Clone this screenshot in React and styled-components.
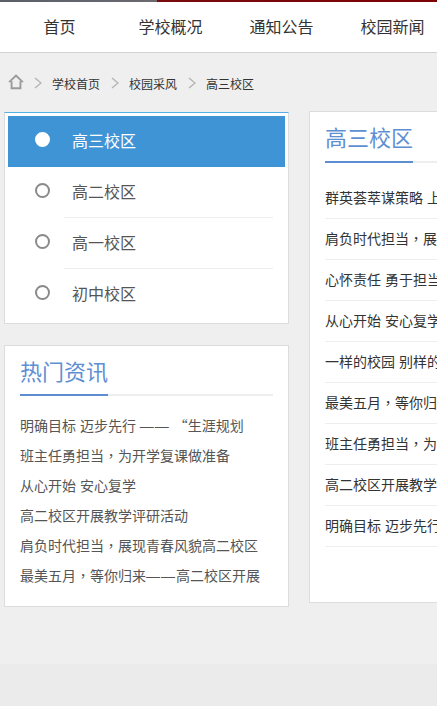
import React from 'react'
import styled, { createGlobalStyle } from 'styled-components'

const GlobalStyle = createGlobalStyle`
  html, body {
    margin: 0;
    padding: 0;
    background: #eeeeee;
    overflow: hidden;
  }
  * { box-sizing: border-box; }
`

const Root = styled.div`
  width: 437px;
  height: 706px;
  overflow: hidden;
  background: #efefef;
  font-family: "Liberation Sans", "Noto Sans CJK SC", sans-serif;
  display: flex;
  flex-direction: column;
`

const TopStrip = styled.div`
  height: 2px;
  flex: none;
  background: linear-gradient(90deg, #5a5f68 0, #6a6a70 36%, #7a0a0c 36%, #7d0205 100%);
`

const Nav = styled.nav`
  height: 51px;
  flex: none;
  background: #fff;
  border-bottom: 1px solid #d2d2d2;
  display: flex;
  padding-left: 4px;
  overflow: hidden;
`

const NavItem = styled.a`
  flex: none;
  width: 111px;
  text-align: center;
  font-size: 16px;
  line-height: 52px;
  color: #333;
`

const Crumbs = styled.div`
  height: 58px;
  flex: none;
  display: flex;
  align-items: center;
  padding: 2px 0 0 8px;
  font-size: 12px;
  color: #333;
`

const HomeSvg = styled.svg`
  width: 16px;
  height: 16px;
  margin: -2px -1px 0 0;
  flex: none;
`

const Chevron = styled.svg`
  width: 8px;
  height: 12px;
  margin: 0 10px 0 11px;
  flex: none;
`

const Columns = styled.div`
  display: flex;
  align-items: flex-start;
  gap: 20px;
  padding-left: 4px;
  height: 553px;
  flex: none;
`

const LeftColumn = styled.div`
  width: 285px;
  flex: none;
  display: flex;
  flex-direction: column;
  gap: 21px;
  padding-top: 1px;
`

const Card = styled.section`
  background: #fff;
  border: 1px solid #dcdcdc;
`

const MenuCard = styled(Card)`
  height: 212px;
  border-top: 1px solid #55b0e4;
  padding: 3px 3px 0;
`

const MenuRow = styled.div`
  height: 51px;
  display: flex;
  padding-left: 27px;
  background: ${p => (p.$active ? '#3f94d6' : 'transparent')};
  color: ${p => (p.$active ? '#fff' : '#555')};
  font-size: 16px;
`

const Dot = styled.span`
  width: 15px;
  height: 15px;
  margin-top: 16px;
  border-radius: 50%;
  flex: none;
  border: 2px solid ${p => (p.$active ? '#fff' : '#8a8a8a')};
  background: ${p => (p.$active ? '#fff' : 'transparent')};
`

const MenuLabel = styled.div`
  flex: none;
  width: 209px;
  padding-left: 8px;
  margin-left: 14px;
  line-height: 51px;
  border-bottom: 1px solid ${p => (p.$line ? '#eeeeee' : 'transparent')};
`

const HotCard = styled(Card)`
  height: 262px;
  padding: 0 15px;
`

const Title = styled.div`
  height: 50px;
  border-bottom: 2px solid #eeeeee;
  display: flex;
`

const TitleText = styled.h2`
  margin: 0 0 -2px;
  font-size: 22px;
  font-weight: 400;
  line-height: 54px;
  color: #5f8fd3;
  border-bottom: 2px solid #5a8ed0;
`

const HotList = styled.ul`
  list-style: none;
  margin: 15px 0 0;
  padding: 0;
`

const HotRow = styled.li`
  height: 30px;
  line-height: 30px;
  font-size: 14px;
  color: #555;
  white-space: nowrap;
`

const MainCard = styled(Card)`
  width: 400px;
  height: 492px;
  flex: none;
  padding: 0 15px;
`

const MainTitle = styled(Title)`
  height: 51px;
`

const NewsList = styled.ul`
  list-style: none;
  margin: 15px 0 0;
  padding: 0;
`

const NewsRow = styled.li`
  height: 41px;
  line-height: 40px;
  font-size: 14px;
  color: #333;
  white-space: nowrap;
  overflow: hidden;
  border-bottom: 1px solid #eeeeee;
`

const Comma = styled.span`
  font-family: "Noto Sans CJK TC", sans-serif;
  line-height: 0;
`

const Quote = styled.span`
  font-family: "Noto Sans CJK SC", sans-serif;
  line-height: 0;
`

const Dash = styled.span`
  letter-spacing: 1px;
`

const Footer = styled.div`
  flex: 1;
  background: #ebebeb;
`

const navItems = ['首页', '学校概况', '通知公告', '校园新闻']
const campuses = ['高三校区', '高二校区', '高一校区', '初中校区']
const hotNews = [
  '明确目标 迈步先行 —— “生涯规划',
  '班主任勇担当，为开学复课做准备',
  '从心开始 安心复学',
  '高二校区开展教学评研活动',
  '肩负时代担当，展现青春风貌高二校区',
  '最美五月，等你归来——高二校区开展',
]
const news = [
  '群英荟萃谋策略 上下同心创佳绩',
  '肩负时代担当，展现青春风貌',
  '心怀责任 勇于担当',
  '从心开始 安心复学',
  '一样的校园 别样的精彩',
  '最美五月，等你归来',
  '班主任勇担当，为开学复课做准备',
  '高二校区开展教学评研活动',
  '明确目标 迈步先行',
]

// punctuation is set differently in the original font
const punctuate = (text) =>
  text.split(/(，|“|——)/).map((part, i) => {
    if (part === '，') return <Comma key={i}>{part}</Comma>
    if (part === '“') return <Quote key={i}>{part}</Quote>
    if (part === '——') return <Dash key={i}>{part}</Dash>
    return part
  })

const HomeIcon = () => (
  <HomeSvg viewBox="0 0 17 17" fill="none" stroke="#9a9a9a" strokeWidth="2">
    <path d="M1.2 8.6 8.5 1.6l7.3 7" />
    <path d="M3.8 7.6v7.6h9.4V7.6" />
  </HomeSvg>
)

const ChevronIcon = () => (
  <Chevron viewBox="0 0 8 12" fill="none" stroke="#b4b4b4" strokeWidth="1.4">
    <path d="M1 1l6 5-6 5" />
  </Chevron>
)

const App = () => {
  return (
    <Root>
      <GlobalStyle />
      <TopStrip />
      <Nav>
        {navItems.map(item => <NavItem key={item}>{item}</NavItem>)}
      </Nav>
      <Crumbs>
        <HomeIcon />
        <ChevronIcon />
        <span>学校首页</span>
        <ChevronIcon />
        <span>校园采风</span>
        <ChevronIcon />
        <span>高三校区</span>
      </Crumbs>
      <Columns>
        <LeftColumn>
          <MenuCard>
            {campuses.map((name, i) => (
              <MenuRow key={name} $active={i === 0}>
                <Dot $active={i === 0} />
                <MenuLabel $line={i === 1 || i === 2}>{name}</MenuLabel>
              </MenuRow>
            ))}
          </MenuCard>
          <HotCard>
            <Title><TitleText>热门资讯</TitleText></Title>
            <HotList>
              {hotNews.map(item => <HotRow key={item}>{punctuate(item)}</HotRow>)}
            </HotList>
          </HotCard>
        </LeftColumn>
        <MainCard>
          <MainTitle><TitleText>高三校区</TitleText></MainTitle>
          <NewsList>
            {news.map(item => <NewsRow key={item}>{punctuate(item)}</NewsRow>)}
          </NewsList>
        </MainCard>
      </Columns>
      <Footer />
    </Root>
  )
}

export default App
